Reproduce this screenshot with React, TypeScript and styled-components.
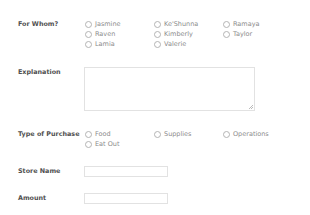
import React from 'react';
import styled, { createGlobalStyle } from 'styled-components';

const GlobalStyle = createGlobalStyle`
  html, body {
    margin: 0;
    padding: 0;
    background: #ffffff;
  }
  body {
    font-family: "DejaVu Sans", Verdana, sans-serif;
  }
`;

const Form = styled.form`
  display: flex;
  flex-direction: column;
  padding: 19px 0 0 18px;
  width: 310px;
  box-sizing: border-box;
`;

const Row = styled.div<{ $gap: number }>`
  display: flex;
  align-items: flex-start;
  margin-bottom: ${props => props.$gap}px;
`;

const Label = styled.label`
  width: 66px;
  flex: none;
  font-size: 6.4px;
  line-height: 10px;
  font-weight: bold;
  color: #505050;
  white-space: nowrap;
`;

const Options = styled.div`
  display: grid;
  grid-template-columns: repeat(3, 69px);
  grid-auto-rows: 10px;
`;

const Option = styled.label`
  display: flex;
  align-items: center;
  gap: 3px;
  font-size: 6.5px;
  line-height: 10px;
  color: #8c8c8c;
  white-space: nowrap;
`;

const Circle = styled.span`
  width: 5px;
  height: 5px;
  margin-left: 1px;
  border: 0.8px solid #b4b4b4;
  border-radius: 50%;
  flex: none;
`;

const TextArea = styled.div`
  position: relative;
  width: 171px;
  height: 44px;
  box-sizing: border-box;
  border: 1px solid #e2e2e2;
`;

const Grip = styled.svg`
  position: absolute;
  right: 1px;
  bottom: 1px;
`;

const Input = styled.div`
  width: 84px;
  height: 11px;
  box-sizing: border-box;
  border: 1px solid #e2e2e2;
`;

const people = [
  'Jasmine', "Ke'Shunna", 'Ramaya',
  'Raven', 'Kimberly', 'Taylor',
  'Lamia', 'Valerie',
];

const purchases = ['Food', 'Supplies', 'Operations', 'Eat Out'];

const RadioList: React.FC<{ items: string[] }> = ({ items }) => (
  <Options>
    {items.map(item => (
      <Option key={item}>
        <Circle />
        {item}
      </Option>
    ))}
  </Options>
);

const App: React.FC = () => (
  <>
    <GlobalStyle />
    <Form>
      <Row $gap={18}>
        <Label>For Whom?</Label>
        <RadioList items={people} />
      </Row>
      <Row $gap={18}>
        <Label>Explanation</Label>
        <TextArea>
          <Grip width="4" height="4" viewBox="0 0 4 4">
            <rect x="3" y="0" width="1" height="1" fill="#bbb" />
            <rect x="2" y="1" width="1" height="1" fill="#bbb" />
            <rect x="3" y="2" width="1" height="1" fill="#bbb" />
            <rect x="1" y="2" width="1" height="1" fill="#bbb" />
            <rect x="0" y="3" width="1" height="1" fill="#bbb" />
            <rect x="2" y="3" width="1" height="1" fill="#bbb" />
          </Grip>
        </TextArea>
      </Row>
      <Row $gap={17}>
        <Label>Type of Purchase</Label>
        <RadioList items={purchases} />
      </Row>
      <Row $gap={16}>
        <Label>Store Name</Label>
        <Input />
      </Row>
      <Row $gap={0}>
        <Label>Amount</Label>
        <Input />
      </Row>
    </Form>
  </>
);

export default App;
